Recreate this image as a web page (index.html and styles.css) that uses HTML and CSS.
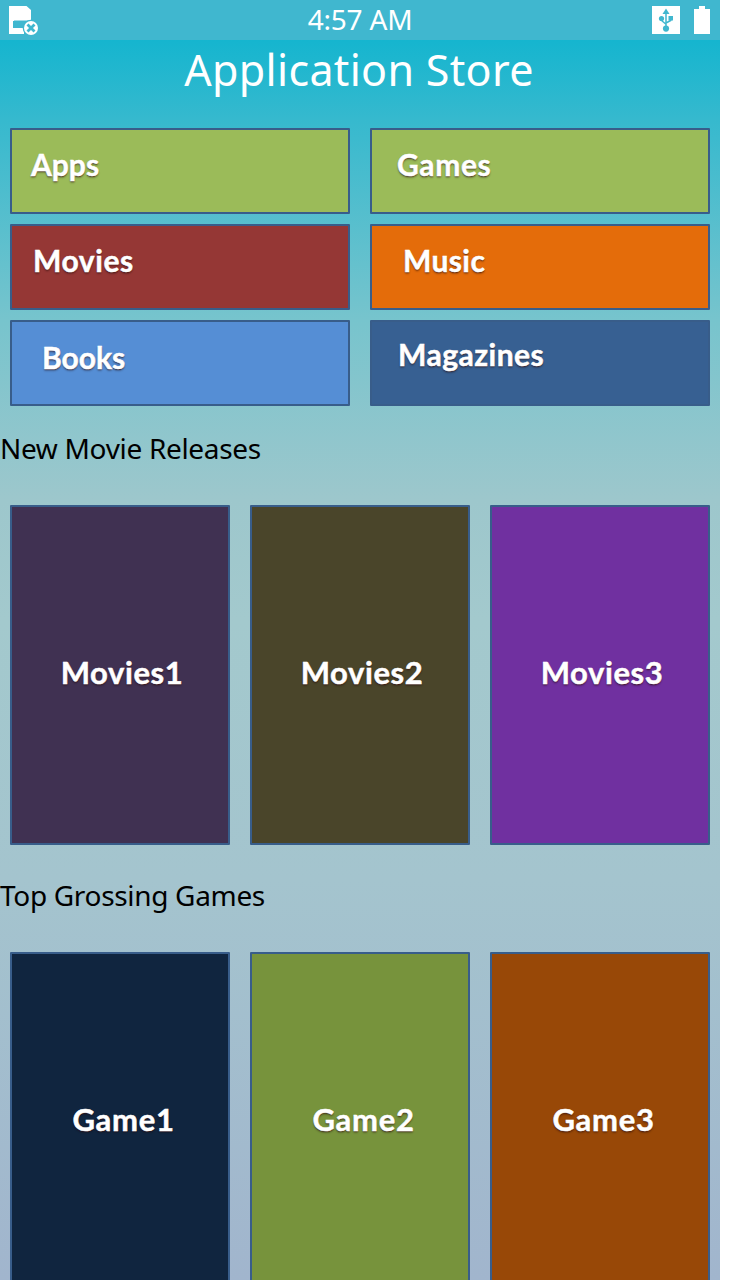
FILE: index.html
```html
<!DOCTYPE html>
<html lang="en">
<head>
<meta charset="utf-8">
<title>Application Store</title>
<link rel="stylesheet" href="styles.css">
</head>
<body>
<div class="screen">
  <div class="status">
    <svg class="card-icon" width="32" height="32" viewBox="0 0 32 32">
      <path d="M1 2h17.500l4.500 4v10.500H6v6.500h10v7H1z" fill="#fff"/>
      <path d="M5 17h18v7H5z" fill="#40b7cf"/>
      <circle cx="23" cy="24" r="8.3" fill="#40b7cf"/>
      <circle cx="23" cy="24" r="7" fill="#fff"/>
      <path d="M19.500 20.500l7 7m0-7l-7 7" stroke="#40b7cf" stroke-width="2.8"/>
      <circle cx="23" cy="24" r="2" fill="#40b7cf"/>
    </svg>
    <span class="time">4:57 AM</span>
    <div class="right-icons">
      <svg width="28" height="28" viewBox="0 0 28 28">
        <path d="M0 0h28v28H0z" fill="#fff"/>
        <g fill="#40b7cf">
          <path d="M14 2.500l3.500 5.500h-7z"/>
          <circle cx="14" cy="22.600" r="3.100"/>
          <circle cx="9.500" cy="12.500" r="2.600"/>
          <path d="M16.500 10h4.500v4.500h-4.500z"/>
        </g>
        <path d="M14 7v15M9.500 12.500v2L14 18.300M18.700 13v1.500L14 17" fill="none" stroke="#40b7cf" stroke-width="1.500"/>
      </svg>
      <svg width="16" height="28" viewBox="0 0 16 28">
        <path d="M5 0h6v3h5v25H0V3h5z" fill="#fff"/>
      </svg>
    </div>
  </div>
  <h1 class="title"><span>Application Store</span></h1>
  <div class="categories">
    <div class="tile apps"><span>Apps</span></div>
    <div class="tile games"><span>Games</span></div>
    <div class="tile movies"><span>Movies</span></div>
    <div class="tile music"><span>Music</span></div>
    <div class="tile books"><span>Books</span></div>
    <div class="tile magazines"><span>Magazines</span></div>
  </div>
  <h2 class="heading releases"><span>New Movie Releases</span></h2>
  <div class="posters">
    <div class="tile poster movie1"><span>Movies1</span></div>
    <div class="tile poster movie2"><span>Movies2</span></div>
    <div class="tile poster movie3"><span>Movies3</span></div>
  </div>
  <h2 class="heading grossing"><span>Top Grossing Games</span></h2>
  <div class="posters top-games">
    <div class="tile poster game1"><span>Game1</span></div>
    <div class="tile poster game2"><span>Game2</span></div>
    <div class="tile poster game3"><span>Game3</span></div>
  </div>
</div>
</body>
</html>
```
FILE: styles.css
```css
* { box-sizing: border-box; }
body { margin: 0; background: #fff; height: 1280px; overflow: hidden; }
.screen {
  width: 720px;
  height: 1280px;
  overflow: hidden;
  font-family: "Noto Sans", "Open Sans", sans-serif;
  background: linear-gradient(#15b5cf 40px, #36b9ce 120px, #77c4cd 320px, #9dc7cc 500px, #a3c9cd 620px, #a4c4ce 880px, #a1b5cd 1280px);
}
.status {
  display: grid;
  grid-template-columns: 1fr auto 1fr;
  align-items: center;
  height: 40px;
  padding: 0 10px 0 8px;
  background: #40b7cf;
  color: #fff;
}
.time { font-size: 28px; line-height: 38px; padding: 0 0 2px 2px; letter-spacing: -0.2px; }
.right-icons { display: flex; justify-content: flex-end; gap: 14px; }
.title {
  margin: 0;
  height: 88px;
  padding-right: 2px;
  color: #fff;
  font-size: 43px;
  font-weight: 400;
  line-height: 60px;
  letter-spacing: 0.32px;
  text-align: center;
}
.categories {
  display: grid;
  grid-template-columns: 340px 340px;
  grid-auto-rows: 86px;
  gap: 10px 20px;
  padding: 0 10px;
}
.tile {
  border: 2px solid #385d8a;
  border-radius: 1px;
  color: #fff;
  font: 700 30px/36px Lato, sans-serif;
  letter-spacing: 0.6px;
  -webkit-text-stroke: 0.5px #fff;
  text-shadow: 0 1px 1px rgba(60, 20, 20, 0.6), 0 2px 2px rgba(30, 10, 10, 0.3);
}
.apps { background: #9bbb59; padding: 16px 0 0 19px; letter-spacing: 0; }
.games { background: #9bbb59; padding: 16px 0 0 25px; }
.movies { background: #953735; padding: 16px 0 0 21px; }
.music { background: #e46c0a; padding: 16px 0 0 31px; letter-spacing: 0.4px; }
.books { background: #558ed5; padding: 17px 0 0 30px; letter-spacing: 0; }
.magazines { background: #376092; padding: 14px 0 0 26px; letter-spacing: 0.5px; }
.heading {
  margin: 0;
  font-size: 28px;
  font-weight: 400;
  line-height: 40px;
  letter-spacing: -0.32px;
  color: #000;
}
.releases { height: 99px; padding-top: 22px; }
.grossing { height: 107px; padding-top: 30px; }
.posters {
  display: grid;
  grid-template-columns: repeat(3, 220px);
  gap: 20px;
  padding: 0 10px;
}
.poster {
  display: flex;
  align-items: center;
  justify-content: center;
  height: 340px;
  padding: 0 0 6px 4px;
  font-size: 31px;
}
.top-games .poster { padding: 0 0 7px 7px; letter-spacing: 0.7px; }
.movie1 { background: #403152; }
.movie2 { background: #4a452a; }
.movie3 { background: #7030a0; }
.game1 { background: #10253f; }
.game2 { background: #77933c; }
.game3 { background: #984807; }
```
